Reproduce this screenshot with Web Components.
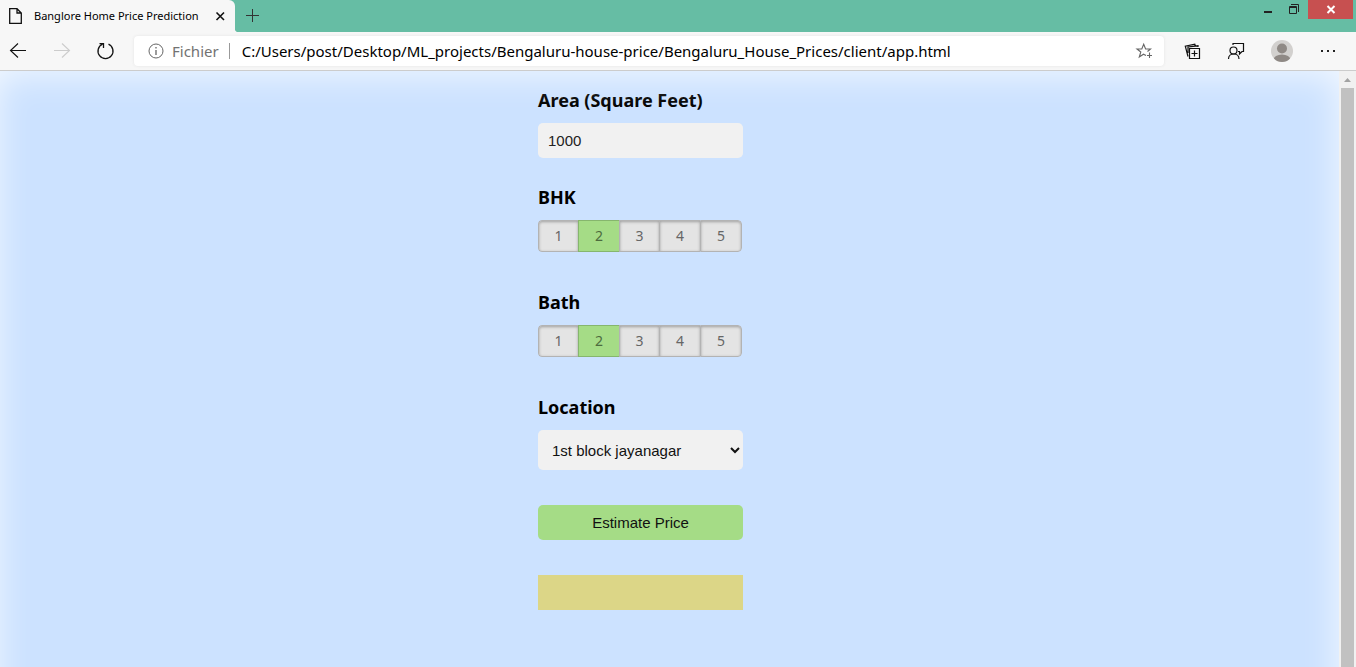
<!DOCTYPE html>
<html lang="en">
<head>
<meta charset="utf-8">
<title>Banglore Home Price Prediction</title>
<style>
html, body { height: 100%; margin: 0; }
body { font-family: "Noto Sans", "Open Sans", sans-serif; color: #000; overflow: hidden; }
</style>
</head>
<body>
<browser-window>
  <tab-strip slot="chrome"><browser-tab>Banglore Home Price Prediction</browser-tab></tab-strip>
  <nav-toolbar slot="chrome" scheme="Fichier" url="C:/Users/post/Desktop/ML_projects/Bengaluru-house-price/Bengaluru_House_Prices/client/app.html"></nav-toolbar>
  <price-form></price-form>
</browser-window>

<script>
const define = (name, html, setup) => {
  const template = document.createElement('template');
  template.innerHTML = html;
  customElements.define(name, class extends HTMLElement {
    constructor() {
      super();
      this.attachShadow({ mode: 'open' }).append(template.content.cloneNode(true));
    }
    connectedCallback() {
      if (setup && !this.ready) { this.ready = true; setup(this, this.shadowRoot); }
    }
  });
};

define('browser-window', `
<style>
:host { display: flex; flex-direction: column; height: 100vh; overflow: hidden; }
.view { flex: 1; min-height: 0; display: flex; }
.page { flex: 1; min-width: 0; overflow: hidden; position: relative; background: #cce2ff; }
.page::after { content: ""; position: absolute; inset: 0 0 -60px -4px; pointer-events: none;
  box-shadow: inset 0 2px 36px rgba(255,255,255,.8); }
</style>
<slot name="chrome"></slot>
<div class="view"><main class="page"><slot></slot></main><scroll-bar></scroll-bar></div>`);

define('scroll-bar', `
<style>
:host { display: flex; flex-direction: column; width: 17px; background: #f1f1f1; }
svg { display: block; width: 17px; height: 17px; }
.thumb { flex: 1; margin: 0 2px; background: #c1c1c1; }
</style>
<svg viewBox="0 0 17 17" aria-hidden="true"><path d="M5 11L8.500 7L12 11Z" fill="#a3a3a3"/></svg>
<div class="thumb"></div>`);

define('tab-strip', `
<style>
:host { display: flex; height: 32px; background: #66bda4; }
button { border: 0; padding: 0; background: none; display: block; }
svg { display: block; }
.add { width: 34px; height: 32px; }
.space { flex: 1; }
.win { width: 26px; height: 19px; }
.close { width: 45px; margin-right: 3px; background: #c75050; }
</style>
<slot></slot>
<button class="add" aria-label="New tab"><svg width="34" height="32" fill="none" stroke="#333"><path d="M11 15.500H24M17.500 9V22"/></svg></button>
<div class="space"></div>
<button class="win" aria-label="Minimize"><svg width="26" height="19"><path d="M8 11H16V13H8Z" fill="#222"/></svg></button>
<button class="win" aria-label="Restore"><svg width="26" height="19" fill="none" stroke="#222"><path d="M7.500 6.500H14.500V13.500H7.500ZM7 7.500H15M9 4.500H16.500V12"/></svg></button>
<button class="close win" aria-label="Close"><svg width="45" height="19" fill="none" stroke="#fff" stroke-width="2"><path d="M19.500 6L26.500 13M26.500 6L19.500 13"/></svg></button>`);

define('browser-tab', `
<style>
:host { position: relative; display: flex; align-items: center; width: 235px; box-sizing: border-box;
  padding: 0 8px; background: #f7f7f7; border-top-right-radius: 6px; font-size: 11px; line-height: 16px; }
:host::after { content: ""; position: absolute; left: 100%; bottom: 0; width: 4px; height: 4px;
  background: radial-gradient(circle at 100% 0, #66bda4 4px, #f7f7f7 5px); }
.title { flex: 1; margin-left: 11px; white-space: nowrap; }
svg { display: block; }
button { border: 0; padding: 0; background: none; }
</style>
<svg width="15" height="18" fill="none" stroke="#111" stroke-width="1.3"><path d="M1.700 1.700H9L13.300 6V16.300H1.700ZM9 1.700V6H13.300"/></svg>
<span class="title"><slot></slot></span>
<button aria-label="Close tab"><svg width="14" height="16" fill="none" stroke="#111" stroke-width="1.6"><path d="M3.500 4.500L11 12M11 4.500L3.500 12"/></svg></button>`);

define('nav-toolbar', `
<style>
:host { display: flex; align-items: center; height: 38px; background: #f7f7f7; border-bottom: 1px solid #ccc; }
button { border: 0; padding: 0; background: none; width: 44px; height: 38px; display: block; flex: none; }
svg { display: block; }
.back { width: 40px; }
.reload { width: 46px; margin-right: 4px; }
form { flex: 1; min-width: 0; height: 30px; display: flex; align-items: center; background: #fff; border-radius: 4px;
  box-shadow: 0 0 3px #e2e2e2; }
.info { margin-left: 14px; }
.scheme { margin-left: 8px; font-size: 15px; line-height: 20px; color: #727272; }
.rule { width: 1px; height: 16px; margin: 0 12px 0 10px; background: #999; }
input { flex: 1; min-width: 0; border: 0; padding: 0; outline: 0; background: none; color: #000;
  font: 15px/20px "Noto Sans", sans-serif; }
.star { width: 40px; height: 30px; }
.more { margin-left: 3px; margin-right: 6px; }
.first { margin-left: 7px; }
</style>
<button class="back" aria-label="Back"><svg width="40" height="38" fill="none" stroke="#111" stroke-width="1.1"><path d="M26 18.500H10.500M18 11.500L10.500 18.500L18 25.500"/></svg></button>
<button aria-label="Forward"><svg width="44" height="38" fill="none" stroke="#ccc" stroke-width="1.1"><path d="M14 18.500H29.500M22 11.500L29.500 18.500L22 25.500"/></svg></button>
<button class="reload" aria-label="Refresh"><svg width="46" height="38" fill="none" stroke="#111" stroke-width="1.3"><path d="M24.500 12.200A7.500 7.500 0 1 1 18.500 12.200M15.500 11.700H19.500V16"/></svg></button>
<form>
  <svg class="info" width="16" height="16" fill="none" stroke="#666"><circle cx="8" cy="8" r="7"/><path d="M8 7V12M8 4V5.500" stroke-width="1.300"/></svg>
  <span class="scheme"></span><span class="rule"></span>
  <input type="text" aria-label="Address">
  <button type="button" class="star" aria-label="Add to favorites"><svg width="40" height="30" fill="none" stroke="#666" stroke-width="1.100"><path d="M22 19.500L19.500 18.200L15.300 21L16.800 16L13 13H17.800L19.700 8.300L21.600 13H26.500L23.500 15.500M25.500 16.500V22M23 19.500H28"/></svg></button>
</form>
<button class="first" aria-label="Collections"><svg width="44" height="38" fill="none" stroke="#111" stroke-width="1.200"><path d="M18.500 16.500H28.500V26.500H18.500ZM23.500 18.500V24.500M20.500 21.500H26.500M17 24.500L14.300 14.200L23.800 12.200L24.500 14.500M17 21V15L27 13.800V15"/></svg></button>
<button aria-label="Feedback"><svg width="44" height="38" fill="none" stroke="#111" stroke-width="1.200"><circle cx="18.500" cy="18.500" r="3.500"/><path d="M13.500 27C13.500 20.300 24 20.300 24 27M18 13V11.500H28.500V19.500H27L24.500 22V19.500H23"/></svg></button>
<button aria-label="Profile"><svg width="44" height="38"><defs><clipPath id="disc"><circle cx="23" cy="19" r="11"/></clipPath></defs><circle cx="23" cy="19" r="11" fill="#d2d0ce"/><g clip-path="url(#disc)" fill="#8f8985"><circle cx="23" cy="16.500" r="5"/><ellipse cx="23" cy="28" rx="8.500" ry="5.500"/></g></svg></button>
<button class="more" aria-label="Settings and more"><svg width="44" height="38" fill="#222"><path d="M15 18h2v2h-2zM21 18h2v2h-2zM27 18h2v2h-2z"/></svg></button>`,
(el, root) => {
  root.querySelector('.scheme').textContent = el.getAttribute('scheme');
  root.querySelector('input').value = el.getAttribute('url');
});

define('rating-switch', `
<style>
:host { display: block; }
fieldset { border: 0; margin: 0; padding: 0; min-width: 0; }
legend { padding: 0; font-size: 18px; font-weight: 700; line-height: 22px; margin-bottom: 12px; }
.row { display: grid; grid-template-columns: 40fr 41fr 40fr 41fr 42fr; height: 32px; margin-right: 1px; border-radius: 4px; overflow: hidden; }
.row div { display: flex; }
input { position: absolute; opacity: 0; width: 1px; height: 1px; margin: 0; }
label { flex: 1; box-sizing: border-box; border: 1px solid #b3b3b3; border-right-width: 0; background: #e4e4e4;
  color: #666; font-size: 14px; line-height: 30px; text-align: center;
  box-shadow: inset 0 1px 3px rgba(0,0,0,.3); }
.row div:first-child label { border-radius: 4px 0 0 4px; }
.row div:last-child label { border-right-width: 1px; border-radius: 0 4px 4px 0; }
input:checked + label { background: #a5dc86; border-color: #86b66d; color: #4d6b3e; box-shadow: none; }
</style>
<fieldset><legend></legend><div class="row"></div></fieldset>`,
(el, root) => {
  const name = el.getAttribute('name');
  root.querySelector('legend').textContent = name;
  root.querySelector('.row').innerHTML = [1, 2, 3, 4, 5].map(n =>
    `<div><input type="radio" name="${name}" id="${name}-${n}" value="${n}"${n === 2 ? ' checked' : ''}><label for="${name}-${n}">${n}</label></div>`).join('');
});

define('price-form', `
<style>
:host { display: grid; grid-template-columns: 538fr 205px 596fr; padding-top: 18px; }
form { grid-column: 2; display: flex; flex-direction: column; }
label { font-size: 18px; font-weight: 700; line-height: 22px; margin-bottom: 12px; white-space: nowrap; }
input, select, .submit { box-sizing: border-box; width: 100%; height: 35px; border: 0; border-radius: 5px;
  background: #f1f1f1; color: #222; font: 15px "Liberation Sans", Arial, sans-serif; margin: 0; }
input { padding: 0 10px; margin-bottom: 28px; }
rating-switch { margin-bottom: 39px; }
select { height: 40px; padding: 0 0 0 10px; margin-bottom: 35px; color: #111; }
.submit { background: #a5dc86; color: #111; margin-bottom: 35px; }
output { display: block; height: 35px; background: #dcd687; }
</style>
<form>
  <label for="area">Area (Square Feet)</label>
  <input id="area" type="text" value="1000">
  <rating-switch name="BHK"></rating-switch>
  <rating-switch name="Bath"></rating-switch>
  <label for="location">Location</label>
  <select id="location"><option>1st block jayanagar</option></select>
  <button class="submit" type="button">Estimate Price</button>
  <output for="area location"></output>
</form>`);
</script>
</body>
</html>
